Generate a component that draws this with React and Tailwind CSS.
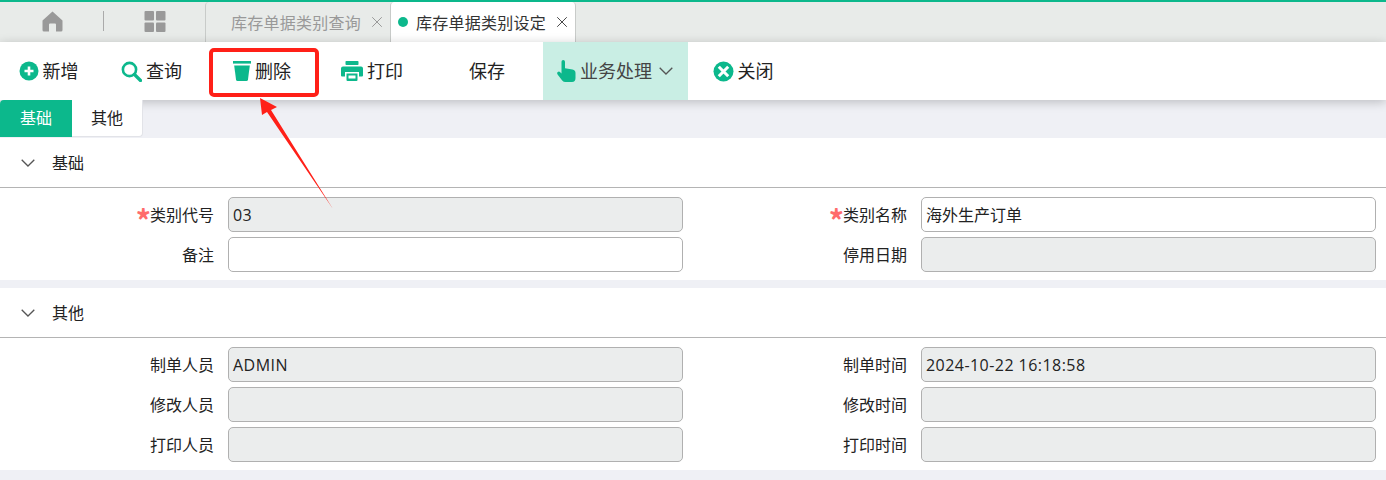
import React from "react";
import { X } from "lucide-react";

const FONT = "[font-family:'Noto_Sans_CJK_SC','Noto_Sans',sans-serif]";

// --- ICONOS ---
const HomeIcon = () => (
  <svg width="21" height="21" viewBox="0 0 21 21" fill="#999999">
    <path d="M10.5 0.5 L20.5 9.5 V19 Q20.5 20.5 19 20.5 H14 V13.5 Q14 12.5 13 12.5 H8 Q7 12.5 7 13.5 V20.5 H2 Q0.5 20.5 0.5 19 V9.5 Z" />
  </svg>
);

const GridIcon = () => (
  <svg width="22" height="21" viewBox="0 0 22 21" fill="#999999">
    <rect x="0.5" y="0" width="9.5" height="9.5" rx="1" />
    <rect x="12" y="0" width="9.5" height="9.5" rx="1" />
    <rect x="0.5" y="11.5" width="9.5" height="9.5" rx="1" />
    <rect x="12" y="11.5" width="9.5" height="9.5" rx="1" />
  </svg>
);

const PlusIcon = () => (
  <svg width="20" height="20" viewBox="0 0 20 20">
    <circle cx="10" cy="10" r="9.5" fill="#0cb88c" />
    <path d="M10 5.5 V14.5 M5.5 10 H14.5" stroke="#fff" strokeWidth="2.6" />
  </svg>
);

const SearchIcon = () => (
  <svg width="21" height="21" viewBox="0 0 21 21" fill="none" stroke="#0cb88c">
    <circle cx="8.5" cy="8.5" r="6.6" strokeWidth="2.6" />
    <path d="M13.5 13.5 L19.5 19.5" strokeWidth="3.2" strokeLinecap="round" />
  </svg>
);

const TrashIcon = () => (
  <svg width="18" height="20" viewBox="0 0 18 20" fill="#0cb88c">
    <rect x="0" y="0" width="18" height="2.6" />
    <path d="M1.2 4.5 H16.8 L15 18.5 Q14.8 20 13.4 20 H4.6 Q3.2 20 3 18.5 Z" />
  </svg>
);

const PrintIcon = () => (
  <svg width="22" height="20" viewBox="0 0 22 20" fill="#0cb88c">
    <rect x="4.5" y="0" width="13" height="4" rx="0.8" />
    <path d="M2 5.5 H20 Q22 5.5 22 7.5 V14.5 Q22 15.5 21 15.5 H18 V11 H4 V15.5 H1 Q0 15.5 0 14.5 V7.5 Q0 5.5 2 5.5 Z" />
    <path d="M5.5 12.5 H16.5 V19 Q16.5 20 15.5 20 H6.5 Q5.5 20 5.5 19 Z" />
    <rect x="7.5" y="14.5" width="7" height="3" fill="#fff" />
  </svg>
);

const HandIcon = () => (
  <svg width="19" height="22" viewBox="0 0 19 22" fill="#0cb88c">
    <path d="M4.5 1.8 Q4.5 0 6.2 0 Q8 0 8 1.8 V8.2 L15.5 9.6 Q18.5 10.2 18.5 13 V18 Q18.5 22 15 22 H8.5 Q6.5 22 5.2 20.4 L0.6 14.5 Q-0.4 13 0.8 12 Q2 11 3.2 12.2 L4.5 13.5 Z" />
  </svg>
);

const CloseIcon = () => (
  <svg width="21" height="21" viewBox="0 0 21 21">
    <circle cx="10.5" cy="10.5" r="10" fill="#0cb88c" />
    <path d="M5.8 5.8 L15.2 15.2 M15.2 5.8 L5.8 15.2" stroke="#fff" strokeWidth="3" />
  </svg>
);

const Chevron = ({ className }) => (
  <svg width="14" height="8" viewBox="0 0 14 8" fill="none" stroke="#555555" strokeWidth="1.3" className={className}>
    <path d="M0.7 0.7 L7 7 L13.3 0.7" />
  </svg>
);

// --- BARRA DE PESTAÑAS ---
function TabBar() {
  return (
    <div className="h-[42px] flex bg-[#e8ebe9] border-t-2 border-[#0cb88c]">
      <div className="w-[103px] flex items-center justify-center pl-[2px] pb-[2px]">
        <HomeIcon />
      </div>
      <div className="w-px h-5 mt-[9px] bg-[#aaaaaa]" />
      <div className="w-[101px] flex items-center justify-center pb-[2px]">
        <GridIcon />
      </div>
      <div className="w-[185px] flex items-center pl-[25px] border-l border-[#c8cbc9] rounded-tl text-[#999999] text-base">
        <span className="leading-none pb-px whitespace-nowrap tracking-[0.25px]">库存单据类别查询</span>
        <X size={18} strokeWidth={1.1} className="ml-[7px] shrink-0 text-[#888888]" />
      </div>
      <div className="w-[186px] flex items-center bg-white border-l border-r border-[#c8cbc9] rounded-t text-[#333333] text-base">
        <span className="w-[10px] h-[10px] rounded-full bg-[#0cb88c] ml-[7px] mr-[8px] shrink-0" />
        <span className="leading-none pb-px whitespace-nowrap tracking-[0.25px]">库存单据类别设定</span>
        <X size={18} strokeWidth={1.2} className="ml-[7px] shrink-0 text-[#333333]" />
      </div>
    </div>
  );
}

// --- BOTÓN DE HERRAMIENTA ---
function ToolButton({ icon, label, className }) {
  return (
    <button className={`h-full flex items-center justify-center gap-1 text-lg text-[#222222] ${className}`}>
      {icon}
      <span className="pb-[3px]">{label}</span>
    </button>
  );
}

function Toolbar() {
  return (
    <div className="h-[58px] flex bg-white relative z-10 shadow-[0_2px_10px_rgba(0,0,0,0.22)]">
      <ToolButton icon={<PlusIcon />} label="新增" className="w-[97px]" />
      <ToolButton icon={<SearchIcon />} label="查询" className="w-[109px]" />
      <ToolButton icon={<TrashIcon />} label="删除" className="w-[112px]" />
      <ToolButton icon={<PrintIcon />} label="打印" className="w-[108px]" />
      <ToolButton label="保存" className="w-[117px] pl-[5px]" />
      <button className="w-[145px] h-full flex items-center pl-[14px] bg-[#c9eee4] text-lg text-[#444444]">
        <HandIcon />
        <span className="ml-1 pb-[3px]">业务处理</span>
        <Chevron className="ml-[7px]" />
      </button>
      <ToolButton icon={<CloseIcon />} label="关闭" className="w-[110px]" />
    </div>
  );
}

// --- FILA DE CAMPO ---
function Field({ label, value, required, disabled, latin }) {
  return (
    <div className="flex items-center pr-[10px]">
      <label className="w-[214px] flex items-center justify-end text-base text-[#222222] leading-none pb-px">
        {required && (
          <span className="text-[#ff6b6b] text-[30px] font-bold leading-none h-[18px] -mt-[2px] -mr-[1px]">*</span>
        )}
        {label}
      </label>
      <div
        className={`ml-[14px] flex-1 h-[35px] px-1 flex items-center rounded-[5px] border border-[#b0b0b0] text-base text-[#222222] ${
          disabled ? "bg-[#ebeded]" : "bg-white"
        } ${latin ? "[font-family:'Open_Sans',sans-serif] tracking-[0.45px]" : "pb-[2px]"}`}
      >
        {value}
      </div>
    </div>
  );
}

function Section({ title, fields }) {
  return (
    <section className="bg-white">
      <header className="h-[50px] flex items-center border-b border-[#b4b4b4]">
        <Chevron className="ml-[21px]" />
        <h2 className="ml-[17px] pb-[2px] text-base text-[#222222]">{title}</h2>
      </header>
      <div className="grid grid-cols-2 gap-y-[5px] pt-[9px] pb-2">
        {fields.map((f) => (
          <Field key={f.label} {...f} />
        ))}
      </div>
    </section>
  );
}

const BASIC = [
  { label: "类别代号", value: "03", required: true, disabled: true, latin: true },
  { label: "类别名称", value: "海外生产订单", required: true },
  { label: "备注" },
  { label: "停用日期", disabled: true },
];

const OTHER = [
  { label: "制单人员", value: "ADMIN", disabled: true, latin: true },
  { label: "制单时间", value: "2024-10-22 16:18:58", disabled: true, latin: true },
  { label: "修改人员", disabled: true },
  { label: "修改时间", disabled: true },
  { label: "打印人员", disabled: true },
  { label: "打印时间", disabled: true },
];

export default function App() {
  return (
    <div className={`relative w-[1386px] h-[480px] overflow-hidden bg-[#eff0f5] ${FONT}`}>
      <TabBar />
      <Toolbar />

      {/* sub tabs */}
      <div className="h-[38px] flex items-start relative z-20">
        <button className="w-[72px] h-[37px] pb-[3px] bg-[#0cb88c] text-white text-base rounded-tl">基础</button>
        <button className="w-[71px] h-[37px] pb-[3px] bg-white text-[#222222] text-base border border-l-0 border-t-0 border-[#e2e3e8] rounded-br">其他</button>
      </div>

      <Section title="基础" fields={BASIC} />
      <div className="h-2" />
      <Section title="其他" fields={OTHER} />

      {/* annotation */}
      <div className="absolute z-30 left-[209px] top-[48px] w-[110px] h-[49px] border-4 border-[#ff2018] rounded-[5px]" />
      <svg className="absolute z-30 left-0 top-0 pointer-events-none" width="400" height="220">
        <polygon points="260,98 277,107 271,110 333,209 267,112 262,115" fill="#ff2018" />
      </svg>
    </div>
  );
}
